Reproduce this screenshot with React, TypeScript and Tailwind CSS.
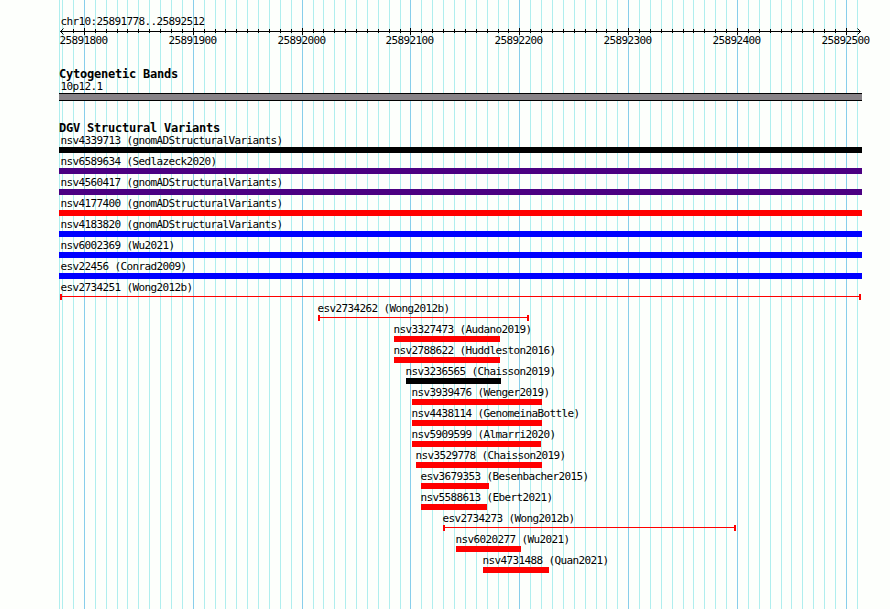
import React from "react";

type Variant = {
  label: string;
  start: number;
  end: number;
  color: string;
  range?: boolean;
};

const REGION_START = 25891778;
const REGION_END = 25892512;
const PX_PER_BASE = 800 / 735;

const variants: Variant[] = [
  { label: "nsv4339713 (gnomADStructuralVariants)", start: 59, end: 862, color: "bg-black" },
  { label: "nsv6589634 (Sedlazeck2020)", start: 59, end: 862, color: "bg-[#4b0082]" },
  { label: "nsv4560417 (gnomADStructuralVariants)", start: 59, end: 862, color: "bg-[#4b0082]" },
  { label: "nsv4177400 (gnomADStructuralVariants)", start: 59, end: 862, color: "bg-[#ff0000]" },
  { label: "nsv4183820 (gnomADStructuralVariants)", start: 59, end: 862, color: "bg-[#0000ff]" },
  { label: "nsv6002369 (Wu2021)", start: 59, end: 862, color: "bg-[#0000ff]" },
  { label: "esv22456 (Conrad2009)", start: 59, end: 862, color: "bg-[#0000ff]" },
  { label: "esv2734251 (Wong2012b)", start: 60, end: 861, color: "bg-[#ff0000]", range: true },
  { label: "esv2734262 (Wong2012b)", start: 318, end: 529, color: "bg-[#ff0000]", range: true },
  { label: "nsv3327473 (Audano2019)", start: 394, end: 500, color: "bg-[#ff0000]" },
  { label: "nsv2788622 (Huddleston2016)", start: 394, end: 500, color: "bg-[#ff0000]" },
  { label: "nsv3236565 (Chaisson2019)", start: 406, end: 501, color: "bg-black" },
  { label: "nsv3939476 (Wenger2019)", start: 412, end: 542, color: "bg-[#ff0000]" },
  { label: "nsv4438114 (GenomeinaBottle)", start: 412, end: 542, color: "bg-[#ff0000]" },
  { label: "nsv5909599 (Almarri2020)", start: 412, end: 541, color: "bg-[#ff0000]" },
  { label: "nsv3529778 (Chaisson2019)", start: 416, end: 542, color: "bg-[#ff0000]" },
  { label: "esv3679353 (Besenbacher2015)", start: 421, end: 489, color: "bg-[#ff0000]" },
  { label: "nsv5588613 (Ebert2021)", start: 421, end: 487, color: "bg-[#ff0000]" },
  { label: "esv2734273 (Wong2012b)", start: 443, end: 736, color: "bg-[#ff0000]", range: true },
  { label: "nsv6020277 (Wu2021)", start: 456, end: 521, color: "bg-[#ff0000]" },
  { label: "nsv4731488 (Quan2021)", start: 483, end: 549, color: "bg-[#ff0000]" },
];

// one tick every 10 bases, a major one every 100
const ticks: { x: number; position: number; major: boolean }[] = [];
for (let p = Math.ceil(REGION_START / 10) * 10; p <= REGION_END; p += 10) {
  ticks.push({
    x: Math.round(60 + (p - REGION_START) * PX_PER_BASE),
    position: p,
    major: p % 100 === 0,
  });
}

const GridLines = () => (
  <svg className="absolute inset-0" width="890" height="609" shapeRendering="crispEdges">
    <rect x="59" y="0" width="1" height="609" fill="#afeeee" />
    {ticks.map((t) => (
      <rect key={t.position} x={t.x} y="0" width="1" height="609" fill={t.major ? "#87ceeb" : "#afeeee"} />
    ))}
  </svg>
);

const Axis = () => (
  <svg className="block" width="890" height="22" viewBox="0 27 890 22">
    <g shapeRendering="crispEdges">
      <rect x="60" y="31" width="801" height="1" />
      {/* the outermost ticks would run into the arrow heads */}
      {ticks.slice(1, -1).map((t) => (
        <rect key={t.position} x={t.x} y={t.major ? 28 : 29} width="1" height={t.major ? 7 : 4} />
      ))}
    </g>
    <path d="M63.5 28.5L60.5 31.5L63.5 34.5M857.5 28.5L860.5 31.5L857.5 34.5" fill="none" stroke="black" />
    {ticks
      .filter((t) => t.major)
      .map((t) => (
        <text key={t.position} x={t.x - 24.5} y="44">
          {t.position}
        </text>
      ))}
  </svg>
);

const TrackTitle = ({ children }: { children: React.ReactNode }) => (
  <h2 className="ml-[59px] h-3 text-[12px] leading-3 font-bold tracking-[-0.224px]">{children}</h2>
);

const VariantRow = ({ variant }: { variant: Variant }) => {
  const { label, start, end, color, range } = variant;
  return (
    <div className="h-[21px]" style={{ marginLeft: start }}>
      <div className={`h-3 leading-3 ${start === 59 ? "ml-[1.5px]" : start === 60 ? "ml-[0.5px]" : "-ml-[0.5px]"}`}>
        {label}
      </div>
      {range ? (
        <div className="flex h-1.5" style={{ width: end - start }}>
          <div className={`w-0.5 ${color}`} />
          <div className={`mt-0.5 h-px flex-1 ${color}`} />
          <div className={`w-0.5 ${color}`} />
        </div>
      ) : (
        <div className={`h-1.5 ${color}`} style={{ width: end - start }} />
      )}
    </div>
  );
};

export default function App() {
  return (
    <div className="relative h-[609px] w-[890px] overflow-hidden bg-[#fdfffc] font-['DejaVu_Sans_Mono',monospace] text-[11px] tracking-[-0.622px] whitespace-pre text-black">
      <GridLines />
      <main className="relative pt-4">
        <div className="ml-[60.5px] h-[11px] leading-[11px]">
          chr10:{REGION_START}..{REGION_END}
        </div>
        <Axis />

        <section className="pt-[19px]">
          <TrackTitle>Cytogenetic Bands</TrackTitle>
          <div className="ml-[60.5px] h-[13px] leading-[13px]">10p12.1</div>
          <div className="ml-[59px] h-2 w-[803px] border-y border-black bg-[#878387]" />
        </section>

        <section className="pt-[21px]">
          <TrackTitle>DGV Structural Variants</TrackTitle>
          <div className="pt-px">
            {variants.map((v) => (
              <VariantRow key={v.label} variant={v} />
            ))}
          </div>
        </section>
      </main>
    </div>
  );
}
